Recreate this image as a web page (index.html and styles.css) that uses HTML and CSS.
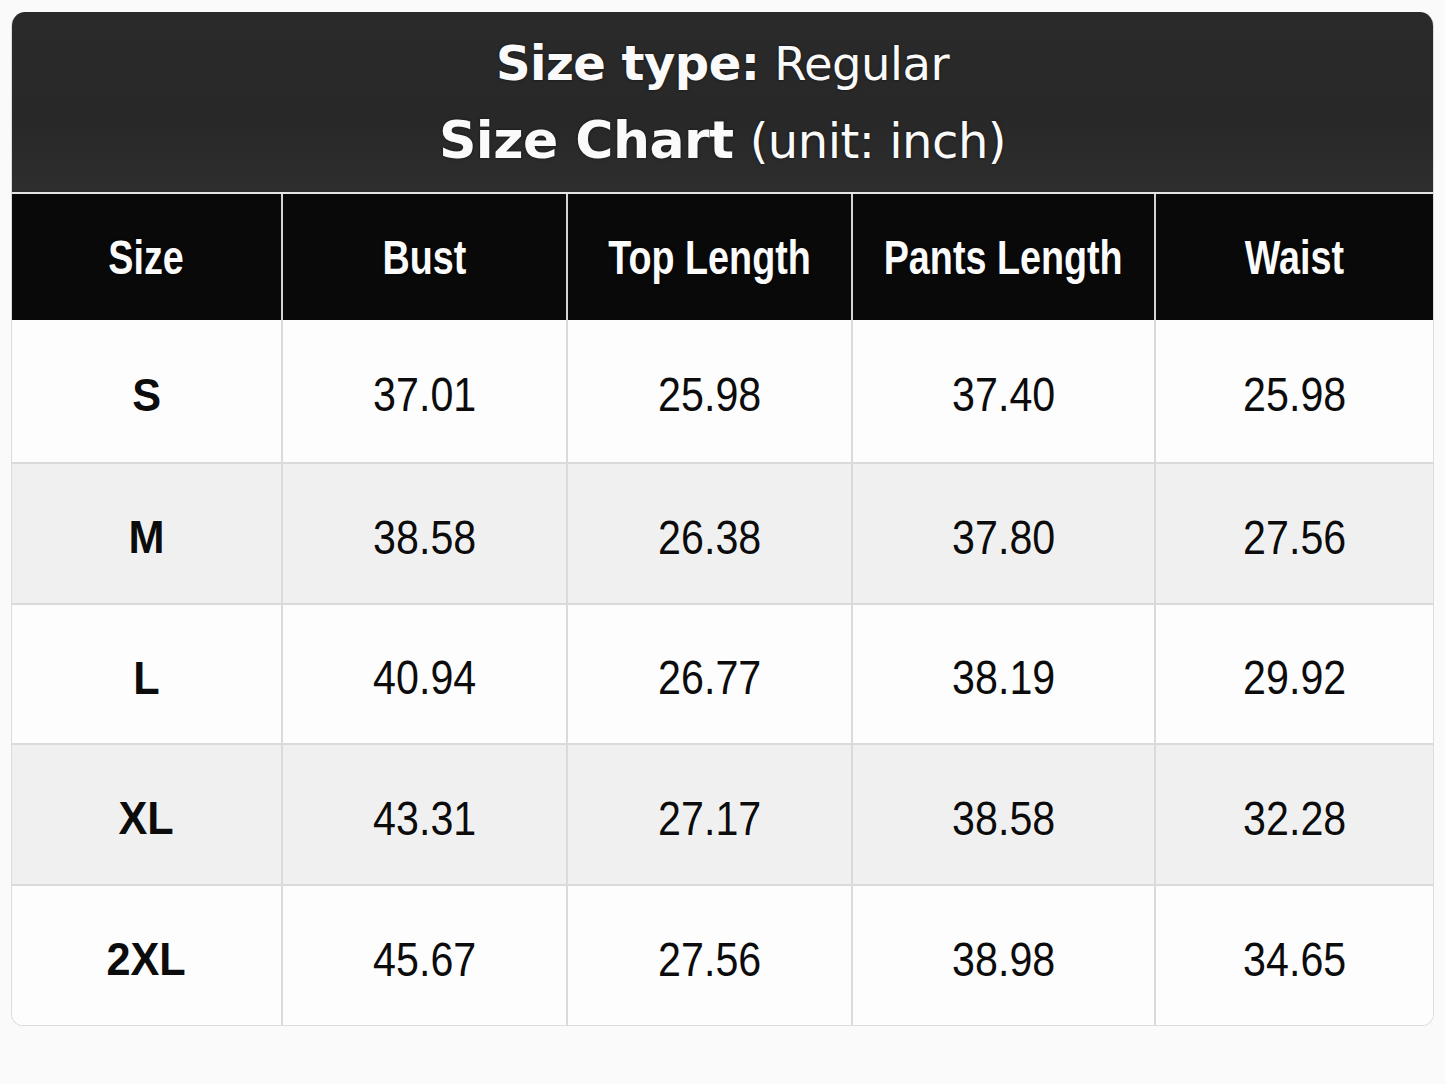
FILE: index.html
```html
<!DOCTYPE html>
<html lang="en">
<head>
<meta charset="utf-8">
<title>Size Chart</title>
<link rel="stylesheet" href="styles.css">
</head>
<body>
<div class="card">
  <div class="title">
    <div class="line one"><b>Size type:</b> <span class="reg">Regular</span></div>
    <div class="line two"><b>Size Chart</b> <span class="reg">(unit: inch)</span></div>
  </div>
  <div class="grid">
    <div class="th"><span>Size</span></div>
    <div class="th"><span>Bust</span></div>
    <div class="th"><span>Top Length</span></div>
    <div class="th"><span>Pants Length</span></div>
    <div class="th last"><span>Waist</span></div>

    <div class="td lbl"><span>S</span></div>
    <div class="td"><span>37.01</span></div>
    <div class="td"><span>25.98</span></div>
    <div class="td"><span>37.40</span></div>
    <div class="td last"><span>25.98</span></div>

    <div class="td lbl alt"><span>M</span></div>
    <div class="td alt"><span>38.58</span></div>
    <div class="td alt"><span>26.38</span></div>
    <div class="td alt"><span>37.80</span></div>
    <div class="td alt last"><span>27.56</span></div>

    <div class="td lbl"><span>L</span></div>
    <div class="td"><span>40.94</span></div>
    <div class="td"><span>26.77</span></div>
    <div class="td"><span>38.19</span></div>
    <div class="td last"><span>29.92</span></div>

    <div class="td lbl alt"><span>XL</span></div>
    <div class="td alt"><span>43.31</span></div>
    <div class="td alt"><span>27.17</span></div>
    <div class="td alt"><span>38.58</span></div>
    <div class="td alt last"><span>32.28</span></div>

    <div class="td lbl end"><span>2XL</span></div>
    <div class="td end"><span>45.67</span></div>
    <div class="td end"><span>27.56</span></div>
    <div class="td end"><span>38.98</span></div>
    <div class="td end last"><span>34.65</span></div>
  </div>
</div>
</body>
</html>
```

FILE: styles.css
```css
html, body {
  margin: 0;
  padding: 0;
  background: #fafafa;
}

body {
  padding: 12px 11px 0 11px;
  height: 1084px;
  box-sizing: border-box;
}

.card {
  width: 1423px;
  border: 1px solid #dcdcdc;
  border-top: none;
  border-radius: 14px 14px 12px 12px;
  overflow: hidden;
  box-sizing: border-box;
  background: #fdfdfd;
}

.title {
  height: 182px;
  box-sizing: border-box;
  padding-top: 13px;
  background: linear-gradient(180deg, #2a2a2a 0%, #282828 60%, #2e2e2e 100%);
  color: #fafafa;
  font-family: "DejaVu Sans", Verdana, sans-serif;
  text-align: center;
  border-bottom: 2px solid #e6e6e6;
  text-shadow: 0 0 3px rgba(0,0,0,0.6);
}

.title .line {
  line-height: 76px;
  letter-spacing: -0.5px;
  white-space: nowrap;
}

.title .one {
  font-size: 48px;
}

.title .one .reg {
  font-size: 46.5px;
}

.title .two {
  font-size: 52px;
}

.title .two .reg {
  font-size: 48px;
}

.title b {
  font-weight: 700;
}

.title .reg {
  font-weight: 400;
}

.grid {
  display: grid;
  grid-template-columns: 271px 285px 285px 303px 1fr;
  grid-template-rows: 126px 144px 141px 140px 141px 139px;
}

.th, .td {
  display: flex;
  align-items: center;
  justify-content: center;
  font-family: "Liberation Sans", Arial, sans-serif;
  white-space: nowrap;
  box-sizing: border-box;
}

.th span, .td span {
  display: inline-block;
}

.th {
  background: #090909;
  color: #fbfbfb;
  font-weight: 700;
  font-size: 49px;
  border-right: 2px solid #d4d4d4;
  text-shadow: 0 0 3px rgba(0,0,0,0.8);
}

.th span {
  transform: scaleX(0.77);
}

.td {
  background: #fdfdfd;
  color: #0c0c0c;
  font-size: 48.5px;
  padding-top: 6px;
  border-right: 2px solid #dadada;
  border-bottom: 2px solid #dadada;
  text-shadow: 0 0 2px rgba(255,255,255,0.9);
}

.td span {
  transform: scaleX(0.85);
}

.td.alt {
  background: #f0f0f0;
}

.td.lbl {
  font-weight: 700;
  font-size: 47px;
}

.td.lbl span {
  transform: scaleX(0.92);
}

.td.end {
  border-bottom: none;
}

.last {
  border-right: none;
}
```
